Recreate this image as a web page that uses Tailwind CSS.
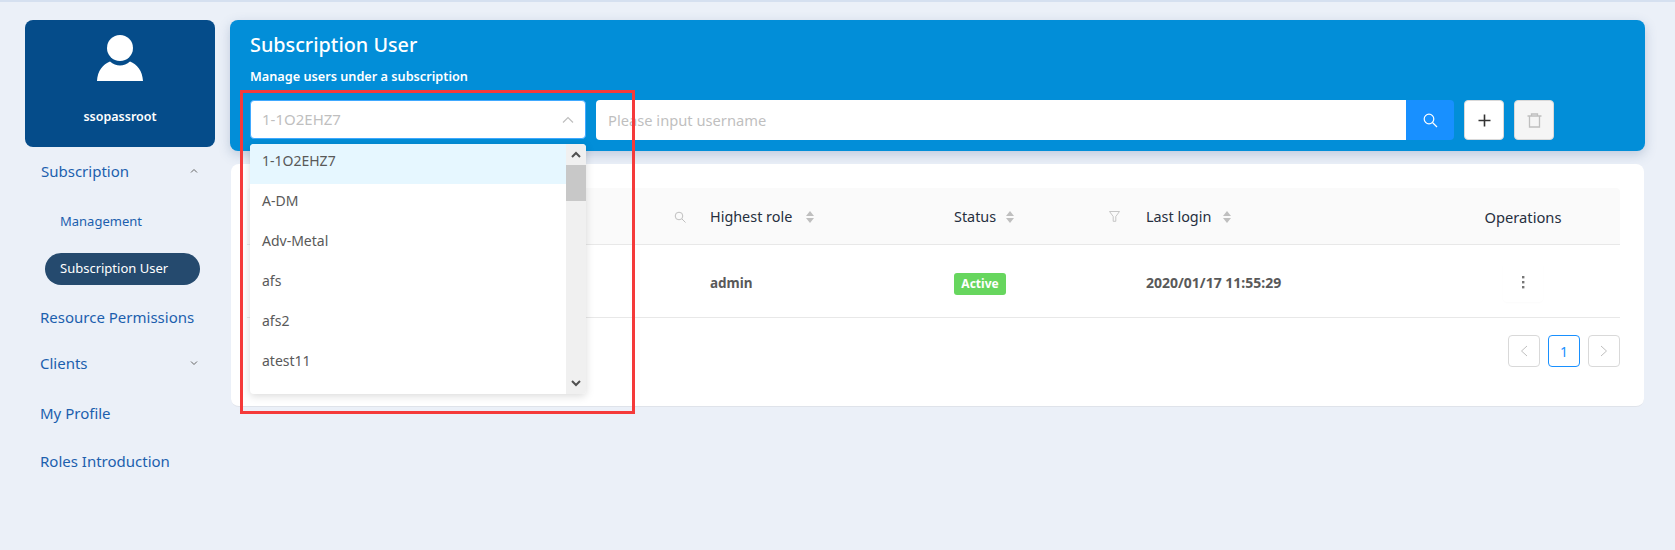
<!DOCTYPE html>
<html lang="en">
<head>
  <meta charset="utf-8" />
  <title>Subscription User</title>
  <script src="https://cdn.jsdelivr.net/npm/@tailwindcss/browser@4"></script>
</head>
<body class="relative h-[550px] w-[1675px] overflow-hidden bg-[#ebf0f8] font-['Noto_Sans',sans-serif] text-[14px] text-[#595959]">
  <div class="h-[2px] bg-[#d5e0f0]"></div>
  <div class="flex pt-[18px]">
    <!-- sidebar -->
    <aside class="ml-[25px] w-[190px] shrink-0">
      <div class="flex h-[127px] flex-col items-center rounded-[8px] bg-[#054c8a] pt-[13px]">
        <svg width="50" height="50" viewBox="0 0 50 50" fill="#fff">
          <circle cx="25" cy="15" r="13" />
          <path d="M2 48 C2.500 38 8 31 15 28.500 C18 31 21.500 32.500 25 32.500 C28.500 32.500 32 31 35 28.500 C42 31 47.500 38 48 48 Z" />
        </svg>
        <div class="mt-[25px] text-[12.500px] font-semibold text-white">ssopassroot</div>
      </div>
      <nav class="text-[#1c5fae]">
        <div class="flex h-[48px] items-center justify-between pl-[16px] pr-[16px] text-[15px]">
          <span>Subscription</span>
          <svg width="10" height="10" viewBox="0 0 10 10" fill="none" stroke="#666" stroke-width="1"><path d="M2 6.500 L5 3.500 L8 6.500" /></svg>
        </div>
        <div class="mt-[3px] flex h-[48px] items-center pl-[35px] text-[13px]">Management</div>
        <div class="ml-[20px] mt-[7px] flex h-[32px] w-[155px] items-center rounded-full bg-[#254a6e] pl-[15px] text-[13px] text-white">Subscription User</div>
        <div class="mt-[16px] flex h-8 items-center pl-[15px] text-[15px]">Resource Permissions</div>
        <div class="mt-[14px] flex h-8 items-center justify-between pl-[15px] pr-[16px] text-[15px]">
          <span>Clients</span>
          <svg width="10" height="10" viewBox="0 0 10 10" fill="none" stroke="#666" stroke-width="1"><path d="M2 3.500 L5 6.500 L8 3.500" /></svg>
        </div>
        <div class="mt-[18px] flex h-8 items-center pl-[15px] text-[15px]">My Profile</div>
        <div class="mt-[16px] flex h-8 items-center pl-[15px] text-[15px]">Roles Introduction</div>
      </nav>
    </aside>

    <main class="ml-[15px] w-[1415px]">
      <!-- blue header -->
      <section class="h-[131px] rounded-[8px] bg-[#028ed8] px-[21px] pt-[10px] shadow-[0_4px_12px_rgba(60,90,140,0.25)]">
        <h1 class="-ml-[1px] text-[19.800px] leading-[30px] font-medium text-white">Subscription User</h1>
        <p class="-ml-[1px] mt-[6px] text-[12.700px] leading-[20px] font-semibold text-white">Manage users under a subscription</p>
        <div class="mt-[14px] flex">
          <div class="-ml-[1px] flex h-[39px] w-[336px] items-center justify-between rounded-[4px] border border-[#40a9ff] bg-white pl-[11px] pr-[10px] text-[15px] text-[#bfbfbf]">
            <span>1-1O2EHZ7</span>
            <svg width="14" height="14" viewBox="0 0 14 14" fill="none" stroke="#bfbfbf" stroke-width="1.200"><path d="M2 9.500 L7 4.500 L12 9.500" /></svg>
          </div>
          <div class="ml-[10px] flex h-[40px] w-[858px]">
            <div class="flex flex-1 items-center rounded-l-[4px] bg-white pl-[12px] text-[14.700px] text-[#bfbfbf]">Please input username</div>
            <div class="flex w-[48px] items-center justify-center rounded-r-[4px] bg-[#1890ff]">
              <svg width="15" height="15" viewBox="0 0 15 15" fill="none" stroke="#fff" stroke-width="1.200"><circle cx="6" cy="6" r="4.800" /><path d="M9.500 9.500 L14 14" /></svg>
            </div>
          </div>
          <div class="ml-[10px] flex h-[40px] w-[40px] items-center justify-center rounded-[4px] border border-[#d9d9d9] bg-white">
            <svg width="13" height="13" viewBox="0 0 13 13" fill="none" stroke="#333" stroke-width="1.600"><path d="M0.500 6.500 H12.500 M6.500 0.500 V12.500" /></svg>
          </div>
          <div class="ml-[10px] flex h-[40px] w-[40px] items-center justify-center rounded-[4px] border border-[#d9d9d9] bg-[#f5f5f5]">
            <svg width="15" height="15" viewBox="0 0 15 15" fill="none" stroke="#bfbfbf" stroke-width="1.300"><path d="M0.500 3 H14.500 M4.500 3 V1 H10.500 V3 M2.500 3 V14 H12.500 V3" /></svg>
          </div>
        </div>
      </section>

      <!-- table card -->
      <section class="ml-[1px] mt-[13px] h-[243px] w-[1413px] rounded-[8px] border-b border-[#dfe3ea] bg-white px-[16px] pt-[24px]">
        <div class="w-[1373px]">
          <div class="grid h-[57px] grid-cols-[463px_244px_192px_280px_194px] items-center rounded-t-[4px] border-b border-[#e8e8e8] bg-[#fafafa] pt-[2px] text-[14.400px] text-[#262f3e]">
            <div class="flex justify-end pr-[24px]">
              <svg width="12" height="12" viewBox="0 0 12 12" fill="none" stroke="#bfbfbf" stroke-width="1"><circle cx="5" cy="5" r="3.800" /><path d="M8 8 L11.500 11.500" /></svg>
            </div>
            <div class="flex items-center gap-[14px]">Highest role
              <svg width="8" height="12" viewBox="0 0 8 12" fill="#bfbfbf"><path d="M4 0 L8 5 H0 Z M4 12 L8 7 H0 Z" /></svg>
            </div>
            <div class="flex items-center justify-between pr-[26px]">
              <span class="flex items-center gap-[10px]">Status
                <svg width="8" height="12" viewBox="0 0 8 12" fill="#bfbfbf"><path d="M4 0 L8 5 H0 Z M4 12 L8 7 H0 Z" /></svg>
              </span>
              <svg width="11" height="11" viewBox="0 0 11 11" fill="none" stroke="#bfbfbf" stroke-width="0.900"><path d="M0.500 0.500 H10.500 L6.800 5.500 V10.300 H4.200 V5.500 Z" /></svg>
            </div>
            <div class="flex items-center gap-[12px]">Last login
              <svg width="8" height="12" viewBox="0 0 8 12" fill="#bfbfbf"><path d="M4 0 L8 5 H0 Z M4 12 L8 7 H0 Z" /></svg>
            </div>
            <div class="text-center text-[14.700px]">Operations</div>
          </div>
          <div class="grid h-[73px] grid-cols-[463px_244px_192px_280px_194px] items-center border-b border-[#e8e8e8] pt-[5px] text-[13.500px] font-bold text-[#595959]">
            <div></div>
            <div>admin</div>
            <div><span class="inline-flex h-[22px] w-[52px] items-center justify-center rounded-[3px] bg-[#67d65e] text-[12px] text-white">Active</span></div>
            <div class="-mt-[2px] text-[14px]">2020/01/17 11:55:29</div>
            <div class="-mt-[3px] flex justify-center">
              <div class="flex h-[40px] w-[40px] items-center justify-center rounded-[4px] shadow-[0_1px_2px_rgba(0,0,0,0.02)]">
                <svg width="3" height="13" viewBox="0 0 3 13" fill="#777"><rect x="0" y="0" width="2.400" height="2.400" /><rect x="0" y="5" width="2.400" height="2.400" /><rect x="0" y="10" width="2.400" height="2.400" /></svg>
              </div>
            </div>
          </div>
          <div class="mt-[17px] flex justify-end gap-[8px]">
            <div class="flex h-[32px] w-[32px] items-center justify-center rounded-[4px] border border-[#d9d9d9]">
              <svg width="8" height="12" viewBox="0 0 8 12" fill="none" stroke="#bfbfbf" stroke-width="1"><path d="M7 1 L1.500 6 L7 11" /></svg>
            </div>
            <div class="flex h-[32px] w-[32px] items-center justify-center rounded-[4px] border border-[#1890ff] text-[14px] text-[#1890ff]">1</div>
            <div class="flex h-[32px] w-[32px] items-center justify-center rounded-[4px] border border-[#d9d9d9]">
              <svg width="8" height="12" viewBox="0 0 8 12" fill="none" stroke="#bfbfbf" stroke-width="1"><path d="M1 1 L6.500 6 L1 11" /></svg>
            </div>
          </div>
        </div>
      </section>
    </main>
  </div>

  <!-- select dropdown -->
  <div class="absolute left-[250px] top-[144px] flex h-[250px] w-[336px] overflow-hidden rounded-[4px] bg-white text-[14px] text-[#595959] shadow-[0_2px_8px_rgba(0,0,0,0.15)]">
    <ul class="w-[316px]">
      <li class="flex h-[40px] items-center bg-[#e6f7ff] pb-[8px] pl-[12px]">1-1O2EHZ7</li>
      <li class="flex h-[40px] items-center pb-[7px] pl-[12px]">A-DM</li>
      <li class="flex h-[40px] items-center pb-[7px] pl-[12px]">Adv-Metal</li>
      <li class="flex h-[40px] items-center pb-[8px] pl-[12px]">afs</li>
      <li class="flex h-[40px] items-center pb-[8px] pl-[12px]">afs2</li>
      <li class="flex h-[40px] items-center pb-[8px] pl-[12px]">atest11</li>
    </ul>
    <div class="flex w-[20px] flex-col items-center justify-between bg-[#f0f0f0]">
      <div class="flex h-[21px] w-full items-center justify-center">
        <svg width="10" height="7" viewBox="0 0 10 7" fill="none" stroke="#505050" stroke-width="2"><path d="M1 6 L5 2 L9 6" /></svg>
      </div>
      <div class="h-[36px] w-full bg-[#c8c8c8]"></div>
      <div class="flex-1"></div>
      <div class="flex h-[21px] w-full items-center justify-center">
        <svg width="10" height="7" viewBox="0 0 10 7" fill="none" stroke="#505050" stroke-width="2"><path d="M1 1 L5 5 L9 1" /></svg>
      </div>
    </div>
  </div>

  <!-- red annotation box -->
  <div class="pointer-events-none absolute left-[240px] top-[90px] h-[324px] w-[395px] border-[3px] border-[#f53a3a]"></div>
</body>
</html>
